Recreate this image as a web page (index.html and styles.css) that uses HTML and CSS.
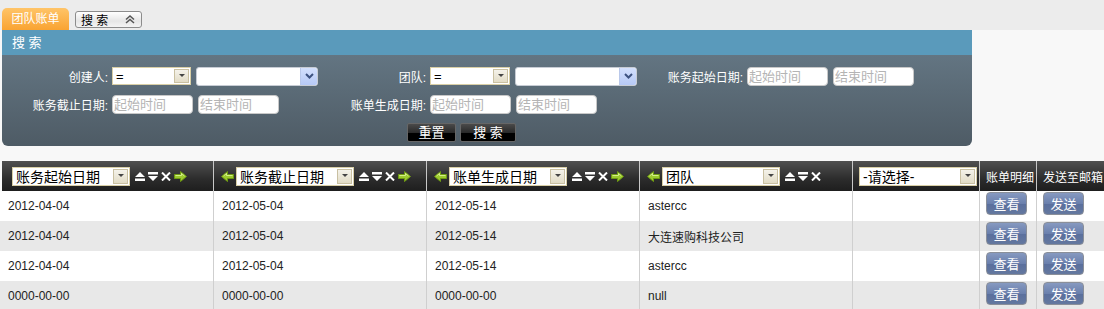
FILE: index.html
```html
<!DOCTYPE html>
<html lang="zh">
<head>
<meta charset="utf-8">
<link rel="stylesheet" href="styles.css">
</head>
<body>
<div class="tabbar">
  <span class="tab">团队账单</span>
  <span class="tabsel"><span>搜 索</span>
    <svg class="dchev" width="10" height="9" viewBox="0 0 10 9"><path d="M1 4.5L5 1l4 3.5M1 8L5 4.5 9 8" fill="none" stroke="#555" stroke-width="1.5"/></svg>
  </span>
</div>

<div class="panel">
  <div class="panel-head">搜 索</div>
  <div class="panel-body">
    <label class="lbl">创建人:</label>
    <div class="fld">
      <span class="xsel w79"><span class="v">=</span><span class="dd"><svg width="6" height="4" viewBox="0 0 6 4"><path d="M0 0h6L3 3z" fill="#444"/></svg></span></span>
      <span class="bsel w122"><span class="v"></span><span class="bdd"><svg width="9" height="6" viewBox="0 0 9 6"><path d="M1 1l3.5 3.5L8 1" fill="none" stroke="#3d5280" stroke-width="2"/></svg></span></span>
    </div>
    <label class="lbl">团队:</label>
    <div class="fld">
      <span class="xsel w80"><span class="v">=</span><span class="dd"><svg width="6" height="4" viewBox="0 0 6 4"><path d="M0 0h6L3 3z" fill="#444"/></svg></span></span>
      <span class="bsel w122"><span class="v"></span><span class="bdd"><svg width="9" height="6" viewBox="0 0 9 6"><path d="M1 1l3.5 3.5L8 1" fill="none" stroke="#3d5280" stroke-width="2"/></svg></span></span>
    </div>
    <label class="lbl">账务起始日期:</label>
    <div class="fld">
      <input class="dt" placeholder="起始时间"><input class="dt" placeholder="结束时间">
    </div>

    <label class="lbl">账务截止日期:</label>
    <div class="fld">
      <input class="dt" placeholder="起始时间"><input class="dt" placeholder="结束时间">
    </div>
    <label class="lbl">账单生成日期:</label>
    <div class="fld">
      <input class="dt" placeholder="起始时间"><input class="dt" placeholder="结束时间">
    </div>
    <div class="lbl"></div><div class="fld"></div>

    <div class="btnrow">
      <button class="blk w49">重置</button>
      <button class="blk w56">搜 索</button>
    </div>
  </div>
</div>

<table class="grid">
  <thead>
    <tr>
      <th class="c1 first"><div class="hc">
        <span class="hsel"><span class="v">账务起始日期</span><span class="dd"><svg width="6" height="4" viewBox="0 0 6 4"><path d="M0 0h6L3 3z" fill="#444"/></svg></span></span>
        <span class="ico"><svg width="10" height="9" viewBox="0 0 10 9"><path d="M5 0l5 5H0z M0 6.5h10V9H0z" fill="#fff"/></svg><svg width="10" height="9" viewBox="0 0 10 9"><path d="M0 0h10v2.5H0z M0 4h10L5 9z" fill="#fff"/></svg><svg width="10" height="9" viewBox="0 0 10 9"><path d="M1 0.5l8 8M9 0.5l-8 8" stroke="#fff" stroke-width="2"/></svg><svg class="ar" width="13" height="11" viewBox="0 0 13 11"><path d="M0.5 3.5h6v-3l6 5-6 5v-3h-6z" fill="#9ccb2e" stroke="#6f9a12" stroke-width="1"/><path d="M1.5 4.5h6v-2l3 2.5" fill="none" stroke="#d5f08a" stroke-width="1"/></svg></span>
      </div></th>
      <th class="c2"><div class="hc">
        <svg class="al" width="13" height="11" viewBox="0 0 13 11"><path d="M12.5 3.5h-6v-3l-6 5 6 5v-3h6z" fill="#9ccb2e" stroke="#6f9a12" stroke-width="1"/><path d="M11.5 4.5h-6v-2l-3 2.5" fill="none" stroke="#d5f08a" stroke-width="1"/></svg>
        <span class="hsel"><span class="v">账务截止日期</span><span class="dd"><svg width="6" height="4" viewBox="0 0 6 4"><path d="M0 0h6L3 3z" fill="#444"/></svg></span></span>
        <span class="ico"><svg width="10" height="9" viewBox="0 0 10 9"><path d="M5 0l5 5H0z M0 6.5h10V9H0z" fill="#fff"/></svg><svg width="10" height="9" viewBox="0 0 10 9"><path d="M0 0h10v2.5H0z M0 4h10L5 9z" fill="#fff"/></svg><svg width="10" height="9" viewBox="0 0 10 9"><path d="M1 0.5l8 8M9 0.5l-8 8" stroke="#fff" stroke-width="2"/></svg><svg class="ar" width="13" height="11" viewBox="0 0 13 11"><path d="M0.5 3.5h6v-3l6 5-6 5v-3h-6z" fill="#9ccb2e" stroke="#6f9a12" stroke-width="1"/><path d="M1.5 4.5h6v-2l3 2.5" fill="none" stroke="#d5f08a" stroke-width="1"/></svg></span>
      </div></th>
      <th class="c3"><div class="hc">
        <svg class="al" width="13" height="11" viewBox="0 0 13 11"><path d="M12.5 3.5h-6v-3l-6 5 6 5v-3h6z" fill="#9ccb2e" stroke="#6f9a12" stroke-width="1"/><path d="M11.5 4.5h-6v-2l-3 2.5" fill="none" stroke="#d5f08a" stroke-width="1"/></svg>
        <span class="hsel"><span class="v">账单生成日期</span><span class="dd"><svg width="6" height="4" viewBox="0 0 6 4"><path d="M0 0h6L3 3z" fill="#444"/></svg></span></span>
        <span class="ico"><svg width="10" height="9" viewBox="0 0 10 9"><path d="M5 0l5 5H0z M0 6.5h10V9H0z" fill="#fff"/></svg><svg width="10" height="9" viewBox="0 0 10 9"><path d="M0 0h10v2.5H0z M0 4h10L5 9z" fill="#fff"/></svg><svg width="10" height="9" viewBox="0 0 10 9"><path d="M1 0.5l8 8M9 0.5l-8 8" stroke="#fff" stroke-width="2"/></svg><svg class="ar" width="13" height="11" viewBox="0 0 13 11"><path d="M0.5 3.5h6v-3l6 5-6 5v-3h-6z" fill="#9ccb2e" stroke="#6f9a12" stroke-width="1"/><path d="M1.5 4.5h6v-2l3 2.5" fill="none" stroke="#d5f08a" stroke-width="1"/></svg></span>
      </div></th>
      <th class="c4"><div class="hc">
        <svg class="al" width="13" height="11" viewBox="0 0 13 11"><path d="M12.5 3.5h-6v-3l-6 5 6 5v-3h6z" fill="#9ccb2e" stroke="#6f9a12" stroke-width="1"/><path d="M11.5 4.5h-6v-2l-3 2.5" fill="none" stroke="#d5f08a" stroke-width="1"/></svg>
        <span class="hsel"><span class="v">团队</span><span class="dd"><svg width="6" height="4" viewBox="0 0 6 4"><path d="M0 0h6L3 3z" fill="#444"/></svg></span></span>
        <span class="ico"><svg width="10" height="9" viewBox="0 0 10 9"><path d="M5 0l5 5H0z M0 6.5h10V9H0z" fill="#fff"/></svg><svg width="10" height="9" viewBox="0 0 10 9"><path d="M0 0h10v2.5H0z M0 4h10L5 9z" fill="#fff"/></svg><svg width="10" height="9" viewBox="0 0 10 9"><path d="M1 0.5l8 8M9 0.5l-8 8" stroke="#fff" stroke-width="2"/></svg></span>
      </div></th>
      <th class="c5"><div class="hc">
        <span class="hsel"><span class="v">-请选择-</span><span class="dd"><svg width="6" height="4" viewBox="0 0 6 4"><path d="M0 0h6L3 3z" fill="#444"/></svg></span></span>
      </div></th>
      <th class="c6 txt">账单明细</th>
      <th class="c7 txt">发送至邮箱</th>
    </tr>
  </thead>
  <tbody>
    <tr>
      <td>2012-04-04</td><td>2012-05-04</td><td>2012-05-14</td><td>astercc</td><td></td>
      <td class="bc"><button class="blue">查看</button></td><td class="bc"><button class="blue">发送</button></td>
    </tr>
    <tr class="alt">
      <td>2012-04-04</td><td>2012-05-04</td><td>2012-05-14</td><td>大连速购科技公司</td><td></td>
      <td class="bc"><button class="blue">查看</button></td><td class="bc"><button class="blue">发送</button></td>
    </tr>
    <tr>
      <td>2012-04-04</td><td>2012-05-04</td><td>2012-05-14</td><td>astercc</td><td></td>
      <td class="bc"><button class="blue">查看</button></td><td class="bc"><button class="blue">发送</button></td>
    </tr>
    <tr class="alt">
      <td>0000-00-00</td><td>0000-00-00</td><td>0000-00-00</td><td>null</td><td></td>
      <td class="bc"><button class="blue">查看</button></td><td class="bc"><button class="blue">发送</button></td>
    </tr>
  </tbody>
</table>
</body>
</html>
```

FILE: styles.css
```css
html, body {
  margin: 0;
  padding: 0;
  overflow: hidden;
}
body {
  background: #f8f8f8;
  font-family: "Liberation Sans", "Noto Sans CJK SC", sans-serif;
  font-size: 12px;
  color: #222;
}

/* tab bar */
.tabbar {
  height: 30px;
  background: #ececec;
  display: flex;
  align-items: flex-start;
  padding-left: 2px;
  box-sizing: border-box;
}
.tab {
  margin-top: 8px;
  width: 67px;
  height: 22px;
  box-sizing: border-box;
  border-radius: 5px 5px 0 0;
  background: linear-gradient(#ffc468, #f9a332);
  color: #fff;
  font-size: 12px;
  line-height: 22px;
  text-align: center;
}
.tabsel {
  margin-top: 11px;
  margin-left: 6px;
  width: 67px;
  height: 17px;
  box-sizing: border-box;
  border: 1px solid #8c8c8c;
  border-radius: 3px;
  background: linear-gradient(#ffffff, #e6e6e6 60%, #f4f4f4);
  display: flex;
  align-items: center;
  justify-content: space-between;
  padding: 0 6px 0 5px;
  font-size: 12px;
  color: #000;
}

/* search panel */
.panel {
  margin-left: 2px;
  width: 970px;
}
.panel-head {
  height: 25px;
  background: #5a9abb;
  color: #fff;
  font-size: 13px;
  line-height: 25px;
  padding-left: 10px;
}
.panel-body {
  height: 91px;
  box-sizing: border-box;
  padding-top: 7px;
  background: linear-gradient(#637582, #4e5b65);
  border-radius: 0 0 6px 6px;
  display: grid;
  grid-template-columns: 108px 220px 98px 212px 105px 1fr;
  grid-auto-rows: 28px;
  color: #fff;
}
.lbl {
  display: flex;
  align-items: center;
  justify-content: flex-end;
  padding-right: 2px;
  font-size: 12px;
  color: #fff;
  white-space: nowrap;
}
.fld {
  display: flex;
  align-items: center;
  gap: 5px;
  padding-left: 2px;
}
.xsel {
  height: 18px;
  box-sizing: border-box;
  border: 1px solid #d9cfa6;
  background: #fff;
  display: flex;
  align-items: stretch;
  color: #000;
  font-size: 13px;
}
.xsel .v, .hsel .v {
  flex: 1;
  padding-left: 3px;
  display: flex;
  align-items: center;
  white-space: nowrap;
}
.xsel .dd, .hsel .dd {
  width: 15px;
  margin: 1px;
  box-sizing: border-box;
  border: 1px solid #c9c0a2;
  background: linear-gradient(#f4f2ea, #e2dcc6);
  display: flex;
  align-items: center;
  justify-content: center;
}
.w79 { width: 79px; }
.w80 { width: 80px; }
.w122 { width: 122px; }
.bsel {
  height: 19px;
  box-sizing: border-box;
  border: 1px solid #c7ccd4;
  border-radius: 3px;
  background: #fff;
  display: flex;
  align-items: stretch;
}
.bsel .v { flex: 1; }
.bsel .bdd {
  width: 16px;
  background: linear-gradient(#d3e0fd, #b6c9f6);
  border-left: 1px solid #b9c8ea;
  display: flex;
  align-items: center;
  justify-content: center;
  border-radius: 0 2px 2px 0;
}
.dt {
  width: 81px;
  height: 19px;
  box-sizing: border-box;
  border: 1px solid #c8c8c8;
  border-radius: 4px;
  padding: 0 0 0 1px;
  margin: 0;
  font-family: "Liberation Sans", "Noto Sans CJK SC", sans-serif;
  font-size: 13px;
  background: #fff;
}
.dt::placeholder { color: #b4b4b4; }
.btnrow {
  grid-column: 1 / -1;
  display: flex;
  align-items: center;
  gap: 4px;
  padding-left: 405px;
}
.blk {
  height: 19px;
  box-sizing: border-box;
  border: 1px solid #666;
  border-radius: 2px;
  background: linear-gradient(#4a4a4a, #2a2a2a 50%, #000 51%, #000);
  color: #fff;
  font-family: "Liberation Sans", "Noto Sans CJK SC", sans-serif;
  font-size: 13px;
  padding: 0;
  line-height: 17px;
}
.w49 { width: 49px; }
.w56 { width: 56px; }

/* grid table */
.grid {
  margin-top: 15px;
  width: 1117px;
  table-layout: fixed;
  border-collapse: separate;
  border-spacing: 0;
}
.grid th, .grid td {
  box-sizing: border-box;
  padding: 0;
}
.c1 { width: 214px; }
.c2, .c3, .c4 { width: 213px; }
.c5 { width: 127px; }
.c6 { width: 57px; }
.c7 { width: 80px; }
.grid thead th {
  height: 30px;
  background: linear-gradient(#505050, #2c2c2c 60%, #1e1e1e);
  border-right: 1px solid #c8c8c8;
  text-align: left;
  vertical-align: middle;
  font-weight: normal;
  white-space: nowrap;
  overflow: hidden;
}
.grid thead th.first { border-left: 2px solid #f8f8f8; }
.grid thead th.txt {
  color: #fff;
  font-size: 12px;
  padding-left: 6px;
}
.hc {
  display: flex;
  align-items: center;
  padding-left: 7px;
}
.first .hc { padding-left: 10px; }
.c5 .hc { padding-left: 6px; }
.hsel {
  width: 118px;
  flex: none;
  height: 19px;
  box-sizing: border-box;
  border: 1px solid #d9cfa6;
  background: #fff;
  display: flex;
  align-items: stretch;
  color: #000;
  font-size: 14px;
}
.al { margin-right: 2px; flex: none; }
.ico {
  display: flex;
  align-items: center;
  gap: 3px;
  margin-left: 5px;
}
.ico .ar { margin-left: 0; }
.grid tbody td {
  height: 30px;
  background: #fff;
  border-right: 1px solid #cfcfcf;
  padding-left: 8px;
  vertical-align: middle;
  font-size: 12px;
  color: #222;
  white-space: nowrap;
}
.grid tbody tr.alt td { background: #e8e8e8; }
.grid tbody td.bc {
  padding-left: 6px;
  vertical-align: top;
  padding-top: 1px;
}
.blue {
  width: 41px;
  height: 23px;
  box-sizing: border-box;
  border: 1px solid #8a8f99;
  border-radius: 4px;
  background: linear-gradient(#8699c0, #6b80ad 50%, #5a6f9d 51%, #64789f);
  color: #fff;
  font-family: "Liberation Sans", "Noto Sans CJK SC", sans-serif;
  font-size: 13px;
  padding: 0;
}
```
